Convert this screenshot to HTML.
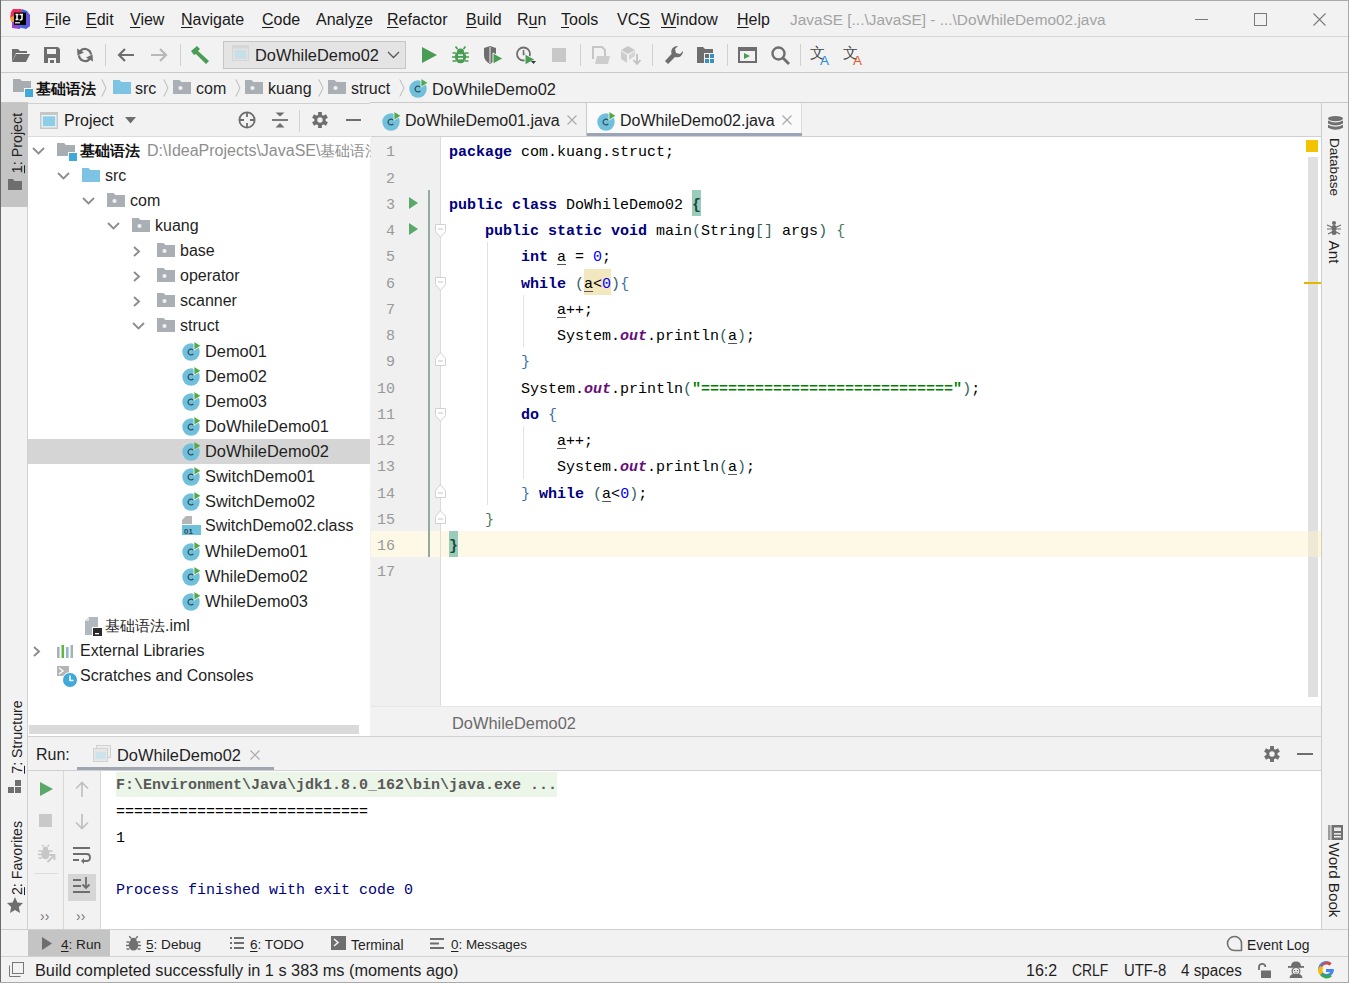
<!DOCTYPE html>
<html><head><meta charset="utf-8">
<style>
*{margin:0;padding:0;box-sizing:border-box}
html,body{width:1349px;height:983px;overflow:hidden;background:#f2f2f2;font-family:"Liberation Sans",sans-serif;font-size:16px;color:#1f1f1f}
.a{position:absolute}
.t{position:absolute;white-space:nowrap;line-height:20px}
.m{font-family:"Liberation Mono",monospace;font-size:15px}
.u{text-decoration:underline;text-underline-offset:1.5px;text-decoration-thickness:1px}
svg{position:absolute;overflow:visible}
.kw{color:#000080;font-weight:bold}
.num{color:#0000ff}
.str{color:#008000;font-weight:bold}
.fld{color:#660e7a;font-style:italic;font-weight:bold}
.ul{text-decoration:underline;text-underline-offset:3px;text-decoration-color:#555}
</style></head><body>

<div class="a" style="left:0px;top:0px;width:1349px;height:983px;background:#f2f2f2;"></div>
<svg style="left:10px;top:9px" width="20" height="20" viewBox="0 0 20 20">
<polygon points="3,0 11,0 14,3 12,9 0,9 1,3" fill="#f02c5c"/>
<polygon points="0,8 5,7 5,13 1,13" fill="#f59a3a"/>
<polygon points="2,13 12,13 10,20 2,19" fill="#9b3dd6"/>
<polygon points="12,0 17,2 20,6 20,17 16,20 8,18 11,4" fill="#4a62e0"/>
<polygon points="16,4 20,6 20,17 17,19" fill="#6a55e3"/>
<rect x="4" y="3.5" width="12" height="12.5" fill="#000"/>
<path d="M5.5,5.5 H8.5 M7,5.5 V10.5 M5.5,10.5 H8.5 M9.5,5.5 H13 M12,5.5 V9.5 Q12,11 10,11 H9.5" stroke="#fff" stroke-width="1.5" fill="none"/>
<rect x="5" y="13" width="5" height="1.5" fill="#ccc"/>
</svg>
<div class="t" style="left:45px;top:10px;color:#1a1a1a"><span class="u">F</span>ile</div>
<div class="t" style="left:86px;top:10px;color:#1a1a1a"><span class="u">E</span>dit</div>
<div class="t" style="left:130px;top:10px;color:#1a1a1a"><span class="u">V</span>iew</div>
<div class="t" style="left:181px;top:10px;color:#1a1a1a"><span class="u">N</span>avigate</div>
<div class="t" style="left:262px;top:10px;color:#1a1a1a"><span class="u">C</span>ode</div>
<div class="t" style="left:316px;top:10px;color:#1a1a1a">Analy<span class="u">z</span>e</div>
<div class="t" style="left:387px;top:10px;color:#1a1a1a"><span class="u">R</span>efactor</div>
<div class="t" style="left:466px;top:10px;color:#1a1a1a"><span class="u">B</span>uild</div>
<div class="t" style="left:517px;top:10px;color:#1a1a1a">R<span class="u">u</span>n</div>
<div class="t" style="left:561px;top:10px;color:#1a1a1a"><span class="u">T</span>ools</div>
<div class="t" style="left:617px;top:10px;color:#1a1a1a">VC<span class="u">S</span></div>
<div class="t" style="left:661px;top:10px;color:#1a1a1a"><span class="u">W</span>indow</div>
<div class="t" style="left:737px;top:10px;color:#1a1a1a"><span class="u">H</span>elp</div>
<div class="t" style="left:790px;top:10px;color:#a3a3a3;font-size:15.4px">JavaSE [...\JavaSE] - ...\DoWhileDemo02.java</div>
<div class="a" style="left:1195px;top:19px;width:13px;height:1px;background:#7a7a7a;"></div>
<div class="a" style="left:1254px;top:13px;width:13px;height:13px;border:1px solid #7a7a7a"></div>
<svg style="left:1313px;top:13px" width="14" height="14" viewBox="0 0 14 14"><path d="M0.5,0.5 L12.5,12.5 M12.5,0.5 L0.5,12.5" stroke="#7a7a7a" stroke-width="1.1"/></svg>
<div class="a" style="left:1px;top:36px;width:1347px;height:1px;background:#d6d6d6;"></div>
<svg style="left:12px;top:48px" width="18" height="14" viewBox="0 0 18 14"><path d="M0,1 h6 l2,2 h7 v2 h-11 l-4,9 z" fill="#6e6e6e"/><path d="M4,6 h14 l-4,8 h-14 z" fill="#6e6e6e"/></svg>
<svg style="left:44px;top:47px" width="16" height="16" viewBox="0 0 16 16"><path d="M0,0 h14 l2,2 v14 h-16 z" fill="#6e6e6e"/><rect x="3" y="2" width="9" height="5" fill="#f2f2f2"/><rect x="4" y="11" width="8" height="5" fill="#f2f2f2"/><rect x="6" y="13" width="4" height="3" fill="#6e6e6e"/></svg>
<svg style="left:77px;top:47px" width="16" height="16" viewBox="0 0 16 16"><path d="M14,7.6 A6.2,6.2 0 0 0 3,4.2" fill="none" stroke="#6e6e6e" stroke-width="2.2"/><path d="M2,8.4 A6.2,6.2 0 0 0 13,11.8" fill="none" stroke="#6e6e6e" stroke-width="2.2"/><polygon points="0,1.5 7,5.5 0.5,8.5" fill="#6e6e6e"/><polygon points="16,14.5 9,10.5 15.5,7.5" fill="#6e6e6e"/></svg>
<div class="a" style="left:105px;top:44px;width:1px;height:22px;background:#d0d0d0;"></div>
<svg style="left:117px;top:48px" width="17" height="14" viewBox="0 0 17 14"><path d="M17,7 H2 M8,1 L2,7 L8,13" fill="none" stroke="#6e6e6e" stroke-width="2.2"/></svg>
<svg style="left:151px;top:48px" width="17" height="14" viewBox="0 0 17 14"><path d="M0,7 H15 M9,1 L15,7 L9,13" fill="none" stroke="#b8b8b8" stroke-width="2.2"/></svg>
<div class="a" style="left:180px;top:44px;width:1px;height:22px;background:#d0d0d0;"></div>
<svg style="left:190px;top:46px" width="20" height="18" viewBox="0 0 20 18"><path d="M1,5 L7,0 L10,3 L8,5 L19,15 L16,18 L6,8 L4,9 z" fill="#499c54"/></svg>
<div class="a" style="left:223px;top:41px;width:183px;height:28px;background:#e4e4e4;border:1px solid #c6c6c6"></div>
<svg style="left:232px;top:45px" width="17" height="16" viewBox="0 0 17 16"><rect x="0.5" y="0.5" width="16" height="15" fill="#e2e2e2" stroke="#d6d6d6"/><rect x="0.5" y="0.5" width="16" height="3" fill="#d6d6d6"/><rect x="2.5" y="5" width="12" height="9" fill="#c9dfe8"/></svg>
<div class="t" style="left:255px;top:45px;color:#1f1f1f;font-size:16.4px">DoWhileDemo02</div>
<svg style="left:387px;top:51px" width="13" height="8" viewBox="0 0 13 8"><path d="M1,1 L6.5,6.5 L12,1" fill="none" stroke="#555" stroke-width="1.3"/></svg>
<svg style="left:422px;top:47px" width="15" height="16" viewBox="0 0 15 16"><polygon points="0,0 15,8 0,16" fill="#499c54"/></svg>
<svg style="left:452px;top:46px" width="17" height="18" viewBox="0 0 17 18"><ellipse cx="8.5" cy="11" rx="5.6" ry="6.3" fill="#499c54"/><ellipse cx="8.5" cy="5" rx="3.5" ry="2.6" fill="#499c54"/><path d="M0.5,7 H4 M13,7 H16.5 M0,11 H4 M13,11 H17 M0.5,15 H4 M13,15 H16.5 M5.5,3 L3.5,0.5 M11.5,3 L13.5,0.5" stroke="#499c54" stroke-width="1.7"/><rect x="6" y="8.3" width="5" height="1.6" fill="#e6f0e6"/><rect x="6" y="11.8" width="5" height="1.6" fill="#e6f0e6"/></svg>
<svg style="left:484px;top:46px" width="20" height="19" viewBox="0 0 20 19"><path d="M0,2 L6,0 L12,2 V9 Q12,15 6,18 Q0,15 0,9 z" fill="#6e6e6e"/><path d="M6,1 V17" stroke="#f2f2f2" stroke-width="1"/><polygon points="9,7 19,12.5 9,18" fill="#499c54" stroke="#f2f2f2" stroke-width="1"/></svg>
<svg style="left:516px;top:46px" width="20" height="19" viewBox="0 0 20 19"><circle cx="7.5" cy="8" r="6.5" fill="none" stroke="#6e6e6e" stroke-width="1.8"/><path d="M7.5,4 V8.5 H10" fill="none" stroke="#6e6e6e" stroke-width="1.6"/><polygon points="9,8 19,13.5 9,19" fill="#499c54" stroke="#f2f2f2" stroke-width="1"/><polygon points="15,15 20,15 17.5,18" fill="#333"/></svg>
<div class="a" style="left:552px;top:48px;width:14px;height:14px;background:#c8c8c8;"></div>
<div class="a" style="left:580px;top:44px;width:1px;height:22px;background:#d0d0d0;"></div>
<svg style="left:591px;top:46px" width="19" height="19" viewBox="0 0 19 19"><path d="M1,1 h10 l3,3 v6" fill="none" stroke="#c6c6c6" stroke-width="2"/><rect x="1" y="1" width="2" height="12" fill="#c6c6c6"/><polygon points="6,10 19,10 17,18 4,18" fill="#cdcdcd"/></svg>
<svg style="left:621px;top:46px" width="20" height="20" viewBox="0 0 20 20"><polygon points="0,4 7,0 14,4 7,8" fill="#c8c8c8"/><polygon points="0,5 6,9 6,17 0,13" fill="#cdcdcd"/><polygon points="8,9 14,5 14,10 8,14" fill="#d5d5d5"/><path d="M16,8 V17 M12.5,14 L16,18 L19.5,14" fill="none" stroke="#c0c0c0" stroke-width="1.8"/></svg>
<div class="a" style="left:652px;top:44px;width:1px;height:22px;background:#d0d0d0;"></div>
<svg style="left:665px;top:46px" width="20" height="19" viewBox="0 0 20 19"><path d="M12,0 A6,6 0 0 0 6.5,8 L0,15 L3,18 L10,11 A6,6 0 0 0 18,5 L15,8 L11,7 L10,3 L13,0 z" fill="#6e6e6e"/></svg>
<svg style="left:697px;top:47px" width="20" height="17" viewBox="0 0 20 17"><path d="M0,0 h6 l2,2 h8 v4 h-9 v10 h-7 z" fill="#6e6e6e"/><rect x="8" y="7" width="4" height="4" fill="#6e6e6e"/><rect x="13" y="7" width="4" height="4" fill="#3592c4"/><rect x="8" y="12" width="4" height="4" fill="#3592c4"/><rect x="13" y="12" width="4" height="4" fill="#3592c4"/></svg>
<div class="a" style="left:727px;top:44px;width:1px;height:22px;background:#d0d0d0;"></div>
<svg style="left:738px;top:47px" width="19" height="16" viewBox="0 0 19 16"><rect x="1" y="1" width="17" height="14" fill="none" stroke="#6e6e6e" stroke-width="2"/><rect x="1" y="1" width="17" height="3" fill="#6e6e6e"/><polygon points="6,6 12,9 6,12" fill="#499c54"/></svg>
<svg style="left:771px;top:46px" width="19" height="19" viewBox="0 0 19 19"><circle cx="7.5" cy="7.5" r="6" fill="none" stroke="#6e6e6e" stroke-width="2.4"/><path d="M12,12 L18,18" stroke="#6e6e6e" stroke-width="2.8"/></svg>
<div class="a" style="left:800px;top:44px;width:1px;height:22px;background:#d0d0d0;"></div>
<svg style="left:810px;top:45px" width="23" height="20" viewBox="0 0 23 20"><text x="0" y="13" font-family="Liberation Sans" font-size="15" fill="#4a4a4a">文</text><text x="10" y="19.5" font-family="Liberation Sans" font-size="13.5" fill="#2e8ad8">A</text></svg>
<svg style="left:843px;top:45px" width="23" height="20" viewBox="0 0 23 20"><text x="0" y="13" font-family="Liberation Sans" font-size="15" fill="#4a4a4a">文</text><text x="10" y="19.5" font-family="Liberation Sans" font-size="13.5" fill="#e8582c">A</text></svg>
<div class="a" style="left:1px;top:72px;width:1347px;height:1px;background:#cacaca;"></div>
<svg style="left:13px;top:79px" width="20" height="18" viewBox="0 0 20 18"><path d="M0,0 h7 l2,2 h9 v11 h-18 z" fill="#a8adb2"/><rect x="11" y="9" width="9" height="9" fill="#fff"/><rect x="12" y="10" width="8" height="8" fill="#3fa9d8"/></svg>
<div class="t" style="left:36px;top:79px;color:#111"><b style="font-size:15px">基础语法</b></div>
<svg style="left:101px;top:79px" width="6" height="18" viewBox="0 0 6 18"><path d="M0.8,0.5 L5,9 L0.8,17.5" fill="none" stroke="#b8b8b8" stroke-width="1"/></svg>
<svg style="left:113px;top:80px" width="18" height="14" viewBox="0 0 18 14"><path d="M0,0 h6.5 l2,2 h9.5 v12 h-18 z" fill="#7dc3e3"/></svg>
<div class="t" style="left:135px;top:79px;">src</div>
<svg style="left:163px;top:79px" width="6" height="18" viewBox="0 0 6 18"><path d="M0.8,0.5 L5,9 L0.8,17.5" fill="none" stroke="#b8b8b8" stroke-width="1"/></svg>
<svg style="left:173px;top:80px" width="18" height="14" viewBox="0 0 18 14"><path d="M0,0 h6.5 l2,2 h9.5 v12 h-18 z" fill="#a9afb4"/><circle cx="7.5" cy="8" r="2.1" fill="#f0f0f0"/></svg>
<div class="t" style="left:196px;top:79px;">com</div>
<svg style="left:235px;top:79px" width="6" height="18" viewBox="0 0 6 18"><path d="M0.8,0.5 L5,9 L0.8,17.5" fill="none" stroke="#b8b8b8" stroke-width="1"/></svg>
<svg style="left:245px;top:80px" width="18" height="14" viewBox="0 0 18 14"><path d="M0,0 h6.5 l2,2 h9.5 v12 h-18 z" fill="#a9afb4"/><circle cx="7.5" cy="8" r="2.1" fill="#f0f0f0"/></svg>
<div class="t" style="left:268px;top:79px;">kuang</div>
<svg style="left:318px;top:79px" width="6" height="18" viewBox="0 0 6 18"><path d="M0.8,0.5 L5,9 L0.8,17.5" fill="none" stroke="#b8b8b8" stroke-width="1"/></svg>
<svg style="left:328px;top:80px" width="18" height="14" viewBox="0 0 18 14"><path d="M0,0 h6.5 l2,2 h9.5 v12 h-18 z" fill="#a9afb4"/><circle cx="7.5" cy="8" r="2.1" fill="#f0f0f0"/></svg>
<div class="t" style="left:351px;top:79px;">struct</div>
<svg style="left:399px;top:79px" width="6" height="18" viewBox="0 0 6 18"><path d="M0.8,0.5 L5,9 L0.8,17.5" fill="none" stroke="#b8b8b8" stroke-width="1"/></svg>
<svg style="left:409px;top:78px" width="20" height="20" viewBox="0 0 20 20"><circle cx="9" cy="11" r="8.7" fill="#70c0dc"/><path d="M11.3,9.2 A2.9,2.9 0 1 0 11.3,12.8" fill="none" stroke="#2f4f5b" stroke-width="1.25"/><polygon points="12,0.5 19,4.8 12,9.2" fill="#4fa84a" stroke="#f2f2f2" stroke-width="0.8"/></svg>
<div class="t" style="left:432px;top:79px;font-size:16.4px">DoWhileDemo02</div>
<div class="a" style="left:1px;top:102px;width:1347px;height:1px;background:#c9c9c9;"></div>
<div class="a" style="left:1px;top:103px;width:27px;height:827px;background:#f2f2f2;"></div>
<div class="a" style="left:27px;top:103px;width:1px;height:827px;background:#d0d0d0;"></div>
<div class="a" style="left:1px;top:103px;width:27px;height:104px;background:#c4c4c4;"></div>
<div class="a" style="left:16.5px;top:143px;width:0;height:0"><div style="position:absolute;left:0;top:0;transform:translate(-50%,-50%) rotate(-90deg);white-space:nowrap;font-size:15px;line-height:18px;color:#222;font-size:14.3px"><span class="u">1</span>: Project</div></div>
<svg style="left:8px;top:179px" width="14" height="11" viewBox="0 0 14 11"><path d="M0,0 h5 l1.5,2 h7.5 v9 h-14 z" fill="#6e6e6e"/></svg>
<div class="a" style="left:16.5px;top:737px;width:0;height:0"><div style="position:absolute;left:0;top:0;transform:translate(-50%,-50%) rotate(-90deg);white-space:nowrap;font-size:15px;line-height:18px;color:#222;font-size:14.2px"><span class="u">7</span>: Structure</div></div>
<svg style="left:8px;top:780px" width="14" height="13" viewBox="0 0 14 13"><rect x="7" y="0" width="6" height="6" fill="#6e6e6e"/><rect x="0" y="7" width="6" height="6" fill="#6e6e6e"/><rect x="7" y="7" width="6" height="6" fill="#6e6e6e"/></svg>
<div class="a" style="left:16.5px;top:858px;width:0;height:0"><div style="position:absolute;left:0;top:0;transform:translate(-50%,-50%) rotate(-90deg);white-space:nowrap;font-size:15px;line-height:18px;color:#222;font-size:14.2px"><span class="u">2</span>: Favorites</div></div>
<svg style="left:7px;top:897px" width="16" height="16" viewBox="0 0 16 16"><polygon points="8,0 10.4,5.6 16,6 11.8,10 13,16 8,13 3,16 4.2,10 0,6 5.6,5.6" fill="#6e6e6e"/></svg>
<div class="a" style="left:28px;top:103px;width:342px;height:34px;background:#f2f2f2;"></div>
<div class="a" style="left:28px;top:102px;width:342px;height:1px;background:#f2f2f2;"></div>
<div class="a" style="left:28px;top:103px;width:342px;height:1px;background:#cfcfcf;"></div>
<svg style="left:40px;top:112px" width="18" height="17" viewBox="0 0 18 17"><rect x="0" y="0" width="18" height="17" fill="#c6c6c6"/><rect x="1.5" y="3" width="15" height="12.5" fill="#eaf5fa"/><rect x="2.8" y="4.3" width="12.4" height="9.9" fill="#8dcde6"/></svg>
<div class="t" style="left:64px;top:111px;">Project</div>
<svg style="left:125px;top:117px" width="11" height="7" viewBox="0 0 11 7"><polygon points="0,0 11,0 5.5,6.5" fill="#6e6e6e"/></svg>
<svg style="left:238px;top:111px" width="18" height="18" viewBox="0 0 18 18"><circle cx="9" cy="9" r="7.6" fill="none" stroke="#6e6e6e" stroke-width="1.8"/><path d="M9,1.5 V6 M9,12 V16.5 M1.5,9 H6 M12,9 H16.5" stroke="#6e6e6e" stroke-width="1.8"/></svg>
<svg style="left:272px;top:112px" width="16" height="16" viewBox="0 0 16 16"><path d="M0,8 H16" stroke="#6e6e6e" stroke-width="1.8"/><polygon points="3.5,0.5 12.5,0.5 8,4.5" fill="#6e6e6e"/><polygon points="3.5,15.5 12.5,15.5 8,11" fill="#6e6e6e"/></svg>
<div class="a" style="left:299px;top:110px;width:1px;height:22px;background:#d2d2d2;"></div>
<svg style="left:312px;top:112px" width="16" height="16" viewBox="0 0 16 16"><g transform="translate(8,8)"><circle r="5.6" fill="#6e6e6e"/><rect x="-1.9" y="-8" width="3.8" height="4" fill="#6e6e6e" transform="rotate(0)"/><rect x="-1.9" y="-8" width="3.8" height="4" fill="#6e6e6e" transform="rotate(60)"/><rect x="-1.9" y="-8" width="3.8" height="4" fill="#6e6e6e" transform="rotate(120)"/><rect x="-1.9" y="-8" width="3.8" height="4" fill="#6e6e6e" transform="rotate(180)"/><rect x="-1.9" y="-8" width="3.8" height="4" fill="#6e6e6e" transform="rotate(240)"/><rect x="-1.9" y="-8" width="3.8" height="4" fill="#6e6e6e" transform="rotate(300)"/><circle r="2.7" fill="#f2f2f2"/></g></svg>
<div class="a" style="left:346px;top:119px;width:15px;height:2px;background:#6e6e6e;"></div>
<div class="a" style="left:28px;top:136px;width:342px;height:1px;background:#dcdcdc;"></div>
<div class="a" style="left:28px;top:137px;width:342px;height:587px;background:#ffffff;"></div>
<div class="a" style="left:28px;top:439px;width:342px;height:25px;background:#d5d5d5;"></div>
<svg style="left:32px;top:147px" width="13" height="8" viewBox="0 0 13 8"><path d="M1,1 L6.5,6.5 L12,1" fill="none" stroke="#8c8c8c" stroke-width="1.8"/></svg>
<svg style="left:57px;top:143px" width="20" height="18" viewBox="0 0 20 18"><path d="M0,0 h7 l2,2 h9 v11 h-18 z" fill="#a8adb2"/><rect x="11" y="9" width="9" height="9" fill="#fff"/><rect x="12" y="10" width="8" height="8" fill="#3fa9d8"/></svg>
<div class="t" style="left:80px;top:141px;color:#111"><b style="font-size:15px">基础语法</b></div>
<div class="t" style="left:147px;top:141px;color:#8e8e8e">D:\IdeaProjects\JavaSE\<span style="font-size:15px">基础语法</span></div>
<svg style="left:57px;top:172px" width="13" height="8" viewBox="0 0 13 8"><path d="M1,1 L6.5,6.5 L12,1" fill="none" stroke="#8c8c8c" stroke-width="1.8"/></svg>
<svg style="left:82px;top:168px" width="18" height="14" viewBox="0 0 18 14"><path d="M0,0 h6.5 l2,2 h9.5 v12 h-18 z" fill="#7dc3e3"/></svg>
<div class="t" style="left:105px;top:166px;">src</div>
<svg style="left:82px;top:197px" width="13" height="8" viewBox="0 0 13 8"><path d="M1,1 L6.5,6.5 L12,1" fill="none" stroke="#8c8c8c" stroke-width="1.8"/></svg>
<svg style="left:107px;top:193px" width="18" height="14" viewBox="0 0 18 14"><path d="M0,0 h6.5 l2,2 h9.5 v12 h-18 z" fill="#a9afb4"/><circle cx="7.5" cy="8" r="2.1" fill="#f0f0f0"/></svg>
<div class="t" style="left:130px;top:191px;">com</div>
<svg style="left:107px;top:222px" width="13" height="8" viewBox="0 0 13 8"><path d="M1,1 L6.5,6.5 L12,1" fill="none" stroke="#8c8c8c" stroke-width="1.8"/></svg>
<svg style="left:132px;top:218px" width="18" height="14" viewBox="0 0 18 14"><path d="M0,0 h6.5 l2,2 h9.5 v12 h-18 z" fill="#a9afb4"/><circle cx="7.5" cy="8" r="2.1" fill="#f0f0f0"/></svg>
<div class="t" style="left:155px;top:216px;">kuang</div>
<svg style="left:133px;top:245.5px" width="8" height="11" viewBox="0 0 8 11"><path d="M1,1 L6,5.5 L1,10" fill="none" stroke="#8c8c8c" stroke-width="1.9"/></svg>
<svg style="left:157px;top:243px" width="18" height="14" viewBox="0 0 18 14"><path d="M0,0 h6.5 l2,2 h9.5 v12 h-18 z" fill="#a9afb4"/><circle cx="7.5" cy="8" r="2.1" fill="#f0f0f0"/></svg>
<div class="t" style="left:180px;top:241px;">base</div>
<svg style="left:133px;top:270.5px" width="8" height="11" viewBox="0 0 8 11"><path d="M1,1 L6,5.5 L1,10" fill="none" stroke="#8c8c8c" stroke-width="1.9"/></svg>
<svg style="left:157px;top:268px" width="18" height="14" viewBox="0 0 18 14"><path d="M0,0 h6.5 l2,2 h9.5 v12 h-18 z" fill="#a9afb4"/><circle cx="7.5" cy="8" r="2.1" fill="#f0f0f0"/></svg>
<div class="t" style="left:180px;top:266px;">operator</div>
<svg style="left:133px;top:295.5px" width="8" height="11" viewBox="0 0 8 11"><path d="M1,1 L6,5.5 L1,10" fill="none" stroke="#8c8c8c" stroke-width="1.9"/></svg>
<svg style="left:157px;top:293px" width="18" height="14" viewBox="0 0 18 14"><path d="M0,0 h6.5 l2,2 h9.5 v12 h-18 z" fill="#a9afb4"/><circle cx="7.5" cy="8" r="2.1" fill="#f0f0f0"/></svg>
<div class="t" style="left:180px;top:291px;">scanner</div>
<svg style="left:132px;top:322px" width="13" height="8" viewBox="0 0 13 8"><path d="M1,1 L6.5,6.5 L12,1" fill="none" stroke="#8c8c8c" stroke-width="1.8"/></svg>
<svg style="left:157px;top:318px" width="18" height="14" viewBox="0 0 18 14"><path d="M0,0 h6.5 l2,2 h9.5 v12 h-18 z" fill="#a9afb4"/><circle cx="7.5" cy="8" r="2.1" fill="#f0f0f0"/></svg>
<div class="t" style="left:180px;top:316px;">struct</div>
<svg style="left:182px;top:341px" width="20" height="20" viewBox="0 0 20 20"><circle cx="9" cy="11" r="8.7" fill="#70c0dc"/><path d="M11.3,9.2 A2.9,2.9 0 1 0 11.3,12.8" fill="none" stroke="#2f4f5b" stroke-width="1.25"/><polygon points="12,0.5 19,4.8 12,9.2" fill="#4fa84a" stroke="#fff" stroke-width="0.8"/></svg>
<div class="t" style="left:205px;top:341px;font-size:16.4px">Demo01</div>
<svg style="left:182px;top:366px" width="20" height="20" viewBox="0 0 20 20"><circle cx="9" cy="11" r="8.7" fill="#70c0dc"/><path d="M11.3,9.2 A2.9,2.9 0 1 0 11.3,12.8" fill="none" stroke="#2f4f5b" stroke-width="1.25"/><polygon points="12,0.5 19,4.8 12,9.2" fill="#4fa84a" stroke="#fff" stroke-width="0.8"/></svg>
<div class="t" style="left:205px;top:366px;font-size:16.4px">Demo02</div>
<svg style="left:182px;top:391px" width="20" height="20" viewBox="0 0 20 20"><circle cx="9" cy="11" r="8.7" fill="#70c0dc"/><path d="M11.3,9.2 A2.9,2.9 0 1 0 11.3,12.8" fill="none" stroke="#2f4f5b" stroke-width="1.25"/><polygon points="12,0.5 19,4.8 12,9.2" fill="#4fa84a" stroke="#fff" stroke-width="0.8"/></svg>
<div class="t" style="left:205px;top:391px;font-size:16.4px">Demo03</div>
<svg style="left:182px;top:416px" width="20" height="20" viewBox="0 0 20 20"><circle cx="9" cy="11" r="8.7" fill="#70c0dc"/><path d="M11.3,9.2 A2.9,2.9 0 1 0 11.3,12.8" fill="none" stroke="#2f4f5b" stroke-width="1.25"/><polygon points="12,0.5 19,4.8 12,9.2" fill="#4fa84a" stroke="#fff" stroke-width="0.8"/></svg>
<div class="t" style="left:205px;top:416px;font-size:16.4px">DoWhileDemo01</div>
<svg style="left:182px;top:441px" width="20" height="20" viewBox="0 0 20 20"><circle cx="9" cy="11" r="8.7" fill="#70c0dc"/><path d="M11.3,9.2 A2.9,2.9 0 1 0 11.3,12.8" fill="none" stroke="#2f4f5b" stroke-width="1.25"/><polygon points="12,0.5 19,4.8 12,9.2" fill="#4fa84a" stroke="#d5d5d5" stroke-width="0.8"/></svg>
<div class="t" style="left:205px;top:441px;font-size:16.4px">DoWhileDemo02</div>
<svg style="left:182px;top:466px" width="20" height="20" viewBox="0 0 20 20"><circle cx="9" cy="11" r="8.7" fill="#70c0dc"/><path d="M11.3,9.2 A2.9,2.9 0 1 0 11.3,12.8" fill="none" stroke="#2f4f5b" stroke-width="1.25"/><polygon points="12,0.5 19,4.8 12,9.2" fill="#4fa84a" stroke="#fff" stroke-width="0.8"/></svg>
<div class="t" style="left:205px;top:466px;font-size:16.4px">SwitchDemo01</div>
<svg style="left:182px;top:491px" width="20" height="20" viewBox="0 0 20 20"><circle cx="9" cy="11" r="8.7" fill="#70c0dc"/><path d="M11.3,9.2 A2.9,2.9 0 1 0 11.3,12.8" fill="none" stroke="#2f4f5b" stroke-width="1.25"/><polygon points="12,0.5 19,4.8 12,9.2" fill="#4fa84a" stroke="#fff" stroke-width="0.8"/></svg>
<div class="t" style="left:205px;top:491px;font-size:16.4px">SwitchDemo02</div>
<svg style="left:182px;top:516px" width="19" height="19" viewBox="0 0 19 19"><path d="M4,0 h6 v8 h-10 v-4 z" fill="#b5b5b5"/><rect x="0" y="9" width="19" height="10" fill="#6ec1dc"/><text x="2" y="17.5" font-family="Liberation Sans" font-size="8" font-weight="bold" fill="#2e4a56">01</text></svg>
<div class="t" style="left:205px;top:516px;font-size:16px">SwitchDemo02.class</div>
<svg style="left:182px;top:541px" width="20" height="20" viewBox="0 0 20 20"><circle cx="9" cy="11" r="8.7" fill="#70c0dc"/><path d="M11.3,9.2 A2.9,2.9 0 1 0 11.3,12.8" fill="none" stroke="#2f4f5b" stroke-width="1.25"/><polygon points="12,0.5 19,4.8 12,9.2" fill="#4fa84a" stroke="#fff" stroke-width="0.8"/></svg>
<div class="t" style="left:205px;top:541px;font-size:16.4px">WhileDemo01</div>
<svg style="left:182px;top:566px" width="20" height="20" viewBox="0 0 20 20"><circle cx="9" cy="11" r="8.7" fill="#70c0dc"/><path d="M11.3,9.2 A2.9,2.9 0 1 0 11.3,12.8" fill="none" stroke="#2f4f5b" stroke-width="1.25"/><polygon points="12,0.5 19,4.8 12,9.2" fill="#4fa84a" stroke="#fff" stroke-width="0.8"/></svg>
<div class="t" style="left:205px;top:566px;font-size:16.4px">WhileDemo02</div>
<svg style="left:182px;top:591px" width="20" height="20" viewBox="0 0 20 20"><circle cx="9" cy="11" r="8.7" fill="#70c0dc"/><path d="M11.3,9.2 A2.9,2.9 0 1 0 11.3,12.8" fill="none" stroke="#2f4f5b" stroke-width="1.25"/><polygon points="12,0.5 19,4.8 12,9.2" fill="#4fa84a" stroke="#fff" stroke-width="0.8"/></svg>
<div class="t" style="left:205px;top:591px;font-size:16.4px">WhileDemo03</div>
<svg style="left:85px;top:617px" width="17" height="19" viewBox="0 0 17 19"><path d="M4,0 H13 V18 H0 V4 Z" fill="#b2b9be"/><path d="M4,0 V4 H0 Z" fill="#dde1e4"/><rect x="7" y="10" width="10" height="9" fill="#fff"/><rect x="8" y="11" width="9" height="8" fill="#2b2b2b"/><rect x="10" y="16" width="4" height="1.3" fill="#fff"/></svg>
<div class="t" style="left:105px;top:616px;"><span style="font-size:15px">基础语法</span>.iml</div>
<svg style="left:33px;top:645.5px" width="8" height="11" viewBox="0 0 8 11"><path d="M1,1 L6,5.5 L1,10" fill="none" stroke="#8c8c8c" stroke-width="1.9"/></svg>
<svg style="left:57px;top:645px" width="18" height="13" viewBox="0 0 18 13"><rect x="0" y="2" width="2.6" height="11" fill="#a7b1b8"/><rect x="4.5" y="0" width="2.6" height="13" fill="#62b543"/><rect x="9" y="2" width="2.6" height="11" fill="#8fb8cf"/><rect x="13.5" y="0" width="2.6" height="13" fill="#a7b1b8"/></svg>
<div class="t" style="left:80px;top:641px;">External Libraries</div>
<svg style="left:57px;top:666px" width="21" height="22" viewBox="0 0 21 22"><rect x="0" y="0" width="12" height="10" fill="#b5b5b5"/><path d="M2,2 L6,5 L2,8" stroke="#fff" fill="none" stroke-width="1.3"/><circle cx="13" cy="14" r="7.5" fill="#40a9dc" stroke="#fff" stroke-width="1"/><path d="M13,9.5 V14.5 H16.5" stroke="#fff" fill="none" stroke-width="1.5"/></svg>
<div class="t" style="left:80px;top:666px;">Scratches and Consoles</div>
<div class="a" style="left:28px;top:724px;width:342px;height:12px;background:#ffffff;"></div>
<div class="a" style="left:29px;top:725px;width:330px;height:9px;background:#dadada;"></div>
<div class="a" style="left:28px;top:736px;width:342px;height:1px;background:#d0d0d0;"></div>
<div class="a" style="left:371px;top:103px;width:950px;height:34px;background:#f2f2f2;"></div>
<svg style="left:382px;top:111px" width="20" height="20" viewBox="0 0 20 20"><circle cx="9" cy="11" r="8.7" fill="#70c0dc"/><path d="M11.3,9.2 A2.9,2.9 0 1 0 11.3,12.8" fill="none" stroke="#2f4f5b" stroke-width="1.25"/><polygon points="12,0.5 19,4.8 12,9.2" fill="#4fa84a" stroke="#f2f2f2" stroke-width="0.8"/></svg>
<div class="t" style="left:405px;top:111px;">DoWhileDemo01.java</div>
<svg style="left:567px;top:115px" width="10" height="10" viewBox="0 0 10 10"><path d="M0.5,0.5 L9.5,9.5 M9.5,0.5 L0.5,9.5" stroke="#a8a8a8" stroke-width="1.1"/></svg>
<div class="a" style="left:587px;top:103px;width:215px;height:30px;background:#fafafa;"></div>
<div class="a" style="left:801px;top:103px;width:1px;height:30px;background:#dadada;"></div>
<div class="a" style="left:586px;top:133px;width:216px;height:3px;background:#9aa5b8;"></div>
<div class="a" style="left:586px;top:103px;width:1px;height:33px;background:#c9c9c9;"></div>
<svg style="left:597px;top:111px" width="20" height="20" viewBox="0 0 20 20"><circle cx="9" cy="11" r="8.7" fill="#70c0dc"/><path d="M11.3,9.2 A2.9,2.9 0 1 0 11.3,12.8" fill="none" stroke="#2f4f5b" stroke-width="1.25"/><polygon points="12,0.5 19,4.8 12,9.2" fill="#4fa84a" stroke="#fafafa" stroke-width="0.8"/></svg>
<div class="t" style="left:620px;top:111px;">DoWhileDemo02.java</div>
<svg style="left:782px;top:115px" width="10" height="10" viewBox="0 0 10 10"><path d="M0.5,0.5 L9.5,9.5 M9.5,0.5 L0.5,9.5" stroke="#a8a8a8" stroke-width="1.1"/></svg>
<div class="a" style="left:371px;top:136px;width:950px;height:1px;background:#d0d0d0;"></div>
<div class="a" style="left:371px;top:137px;width:950px;height:570px;background:#ffffff;"></div>
<div class="a" style="left:371px;top:137px;width:69px;height:570px;background:#f0f0f0;"></div>
<div class="a" style="left:371px;top:531px;width:950px;height:26px;background:#fdf9e6;"></div>
<div class="a" style="left:440px;top:137px;width:1px;height:570px;background:#dcdcdc;"></div>
<div class="a" style="left:428px;top:190px;width:2px;height:367px;background:#92ab9f;"></div>
<div class="t m" style="left:370px;top:140px;width:25px;text-align:right;line-height:26px;color:#999">1</div>
<div class="t m" style="left:370px;top:167px;width:25px;text-align:right;line-height:26px;color:#999">2</div>
<div class="t m" style="left:370px;top:193px;width:25px;text-align:right;line-height:26px;color:#999">3</div>
<div class="t m" style="left:370px;top:219px;width:25px;text-align:right;line-height:26px;color:#999">4</div>
<div class="t m" style="left:370px;top:245px;width:25px;text-align:right;line-height:26px;color:#999">5</div>
<div class="t m" style="left:370px;top:272px;width:25px;text-align:right;line-height:26px;color:#999">6</div>
<div class="t m" style="left:370px;top:298px;width:25px;text-align:right;line-height:26px;color:#999">7</div>
<div class="t m" style="left:370px;top:324px;width:25px;text-align:right;line-height:26px;color:#999">8</div>
<div class="t m" style="left:370px;top:350px;width:25px;text-align:right;line-height:26px;color:#999">9</div>
<div class="t m" style="left:370px;top:377px;width:25px;text-align:right;line-height:26px;color:#999">10</div>
<div class="t m" style="left:370px;top:403px;width:25px;text-align:right;line-height:26px;color:#999">11</div>
<div class="t m" style="left:370px;top:429px;width:25px;text-align:right;line-height:26px;color:#999">12</div>
<div class="t m" style="left:370px;top:455px;width:25px;text-align:right;line-height:26px;color:#999">13</div>
<div class="t m" style="left:370px;top:482px;width:25px;text-align:right;line-height:26px;color:#999">14</div>
<div class="t m" style="left:370px;top:508px;width:25px;text-align:right;line-height:26px;color:#999">15</div>
<div class="t m" style="left:370px;top:534px;width:25px;text-align:right;line-height:26px;color:#999">16</div>
<div class="t m" style="left:370px;top:560px;width:25px;text-align:right;line-height:26px;color:#999">17</div>
<svg style="left:409px;top:197px" width="9" height="12" viewBox="0 0 9 12"><polygon points="0,0 9,6 0,12" fill="#59a869"/></svg>
<svg style="left:409px;top:223px" width="9" height="12" viewBox="0 0 9 12"><polygon points="0,0 9,6 0,12" fill="#59a869"/></svg>
<svg style="left:435px;top:224px" width="11" height="14" viewBox="0 0 11 14"><path d="M0.5,0.5 H10.5 V7.5 L5.5,13.3 L0.5,7.5 Z" fill="#fff" stroke="#d2d2d2"/><path d="M3,5 H8" stroke="#c4c4c4"/></svg>
<svg style="left:435px;top:277px" width="11" height="14" viewBox="0 0 11 14"><path d="M0.5,0.5 H10.5 V7.5 L5.5,13.3 L0.5,7.5 Z" fill="#fff" stroke="#d2d2d2"/><path d="M3,5 H8" stroke="#c4c4c4"/></svg>
<svg style="left:435px;top:408px" width="11" height="14" viewBox="0 0 11 14"><path d="M0.5,0.5 H10.5 V7.5 L5.5,13.3 L0.5,7.5 Z" fill="#fff" stroke="#d2d2d2"/><path d="M3,5 H8" stroke="#c4c4c4"/></svg>
<svg style="left:435px;top:352px" width="11" height="14" viewBox="0 0 11 14"><path d="M0.5,13.5 H10.5 V6.5 L5.5,0.7 L0.5,6.5 Z" fill="#fff" stroke="#d2d2d2"/><path d="M3,9 H8" stroke="#c4c4c4"/></svg>
<svg style="left:435px;top:484px" width="11" height="14" viewBox="0 0 11 14"><path d="M0.5,13.5 H10.5 V6.5 L5.5,0.7 L0.5,6.5 Z" fill="#fff" stroke="#d2d2d2"/><path d="M3,9 H8" stroke="#c4c4c4"/></svg>
<svg style="left:435px;top:510px" width="11" height="14" viewBox="0 0 11 14"><path d="M0.5,13.5 H10.5 V6.5 L5.5,0.7 L0.5,6.5 Z" fill="#fff" stroke="#d2d2d2"/><path d="M3,9 H8" stroke="#c4c4c4"/></svg>
<div class="a" style="left:487px;top:242px;width:1px;height:263px;background:#e2e2e2;"></div>
<div class="a" style="left:523px;top:295px;width:1px;height:52px;background:#e2e2e2;"></div>
<div class="a" style="left:523px;top:426px;width:1px;height:53px;background:#e2e2e2;"></div>
<div class="a" style="left:692px;top:190px;width:9px;height:26px;background:#99ccbb;"></div>
<div class="a" style="left:584px;top:269px;width:27px;height:26px;background:#f2e7bf;"></div>
<div class="a" style="left:449px;top:531px;width:9px;height:26px;background:#99ccbb;"></div>
<div class="t m" style="left:449px;top:140px;line-height:26px;color:#000;white-space:pre"><span class="kw">package</span> com.kuang.struct;</div>
<div class="t m" style="left:449px;top:193px;line-height:26px;color:#000;white-space:pre"><span class="kw">public class</span> DoWhileDemo02 <span style="color:#1d4a3a;font-weight:bold">{</span></div>
<div class="t m" style="left:449px;top:219px;line-height:26px;color:#000;white-space:pre">    <span class="kw">public static void</span> main<span style="color:#33625f">(</span>String<span style="color:#33625f">[]</span> args<span style="color:#33625f">)</span> <span style="color:#4b7a58">{</span></div>
<div class="t m" style="left:449px;top:245px;line-height:26px;color:#000;white-space:pre">        <span class="kw">int</span> <span class="ul">a</span> = <span class="num">0</span>;</div>
<div class="t m" style="left:449px;top:272px;line-height:26px;color:#000;white-space:pre">        <span class="kw">while</span> <span style="color:#33625f">(</span><span class="ul">a</span>&lt;<span class="num">0</span><span style="color:#33625f">)</span><span style="color:#3b6fae">{</span></div>
<div class="t m" style="left:449px;top:298px;line-height:26px;color:#000;white-space:pre">            <span class="ul">a</span>++;</div>
<div class="t m" style="left:449px;top:324px;line-height:26px;color:#000;white-space:pre">            System.<span class="fld">out</span>.println<span style="color:#33625f">(</span><span class="ul">a</span><span style="color:#33625f">)</span>;</div>
<div class="t m" style="left:449px;top:350px;line-height:26px;color:#000;white-space:pre">        <span style="color:#3b6fae">}</span></div>
<div class="t m" style="left:449px;top:377px;line-height:26px;color:#000;white-space:pre">        System.<span class="fld">out</span>.println<span style="color:#33625f">(</span><span class="str">"============================"</span><span style="color:#33625f">)</span>;</div>
<div class="t m" style="left:449px;top:403px;line-height:26px;color:#000;white-space:pre">        <span class="kw">do</span> <span style="color:#3b6fae">{</span></div>
<div class="t m" style="left:449px;top:429px;line-height:26px;color:#000;white-space:pre">            <span class="ul">a</span>++;</div>
<div class="t m" style="left:449px;top:455px;line-height:26px;color:#000;white-space:pre">            System.<span class="fld">out</span>.println<span style="color:#33625f">(</span><span class="ul">a</span><span style="color:#33625f">)</span>;</div>
<div class="t m" style="left:449px;top:482px;line-height:26px;color:#000;white-space:pre">        <span style="color:#3b6fae">}</span> <span class="kw">while</span> <span style="color:#33625f">(</span><span class="ul">a</span>&lt;<span class="num">0</span><span style="color:#33625f">)</span>;</div>
<div class="t m" style="left:449px;top:508px;line-height:26px;color:#000;white-space:pre">    <span style="color:#4b7a58">}</span></div>
<div class="t m" style="left:449px;top:534px;line-height:26px;color:#000;white-space:pre"><span style="color:#1d4a3a;font-weight:bold">}</span></div>
<div class="a" style="left:1306px;top:140px;width:12px;height:12px;background:#f2c300;"></div>
<div class="a" style="left:1308px;top:157px;width:10px;height:540px;background:#e0e0e0;"></div>
<div class="a" style="left:1304px;top:282px;width:17px;height:2px;background:#e8b500;"></div>
<div class="a" style="left:1308px;top:531px;width:13px;height:26px;background:rgba(255,245,200,0.45);"></div>
<div class="a" style="left:371px;top:706px;width:950px;height:1px;background:#e6e6e6;"></div>
<div class="a" style="left:371px;top:707px;width:950px;height:30px;background:#f2f2f2;"></div>
<div class="t" style="left:452px;top:713px;color:#6a6a6a;font-size:16.4px">DoWhileDemo02</div>
<div class="a" style="left:370px;top:736px;width:951px;height:1px;background:#d0d0d0;"></div>
<div class="a" style="left:1321px;top:103px;width:27px;height:827px;background:#f2f2f2;"></div>
<div class="a" style="left:1321px;top:102px;width:1px;height:828px;background:#cdcdcd;"></div>
<svg style="left:1328px;top:116px" width="15" height="16" viewBox="0 0 15 16"><ellipse cx="7.5" cy="2.6" rx="7.5" ry="2.6" fill="#707070"/><path d="M0,4.6 Q7.5,8.6 15,4.6 V7.4 Q7.5,11.4 0,7.4 Z" fill="#707070"/><path d="M0,8.8 Q7.5,12.8 15,8.8 V11.8 Q7.5,15.8 0,11.8 Z" fill="#707070"/></svg>
<div class="a" style="left:1333.5px;top:166.5px;width:0;height:0"><div style="position:absolute;left:0;top:0;transform:translate(-50%,-50%) rotate(90deg);white-space:nowrap;font-size:15px;line-height:18px;color:#222;font-size:13.6px">Database</div></div>
<svg style="left:1327px;top:220px" width="14" height="15" viewBox="0 0 14 15"><circle cx="7" cy="3" r="2" fill="#6e6e6e"/><ellipse cx="7" cy="8" rx="2.5" ry="3" fill="#6e6e6e"/><ellipse cx="7" cy="12.5" rx="2.5" ry="2.5" fill="#6e6e6e"/><path d="M0,5 L7,8 L14,5 M0,9 H14 M1,14 L7,11 L13,14" stroke="#6e6e6e" stroke-width="1.2" fill="none"/></svg>
<div class="a" style="left:1333.5px;top:251.5px;width:0;height:0"><div style="position:absolute;left:0;top:0;transform:translate(-50%,-50%) rotate(90deg);white-space:nowrap;font-size:15px;line-height:18px;color:#222;font-size:15.2px">Ant</div></div>
<svg style="left:1328px;top:825px" width="15" height="15" viewBox="0 0 15 15"><rect x="0" y="0" width="2.5" height="15" fill="#9c9c9c"/><rect x="3.5" y="0" width="11.5" height="15" fill="#707070"/><rect x="6" y="2.5" width="7" height="3.5" fill="#e8e8e8"/><rect x="6" y="8" width="7" height="1.6" fill="#e8e8e8"/><rect x="6" y="11" width="7" height="1.6" fill="#e8e8e8"/></svg>
<div class="a" style="left:1333.5px;top:880px;width:0;height:0"><div style="position:absolute;left:0;top:0;transform:translate(-50%,-50%) rotate(90deg);white-space:nowrap;font-size:15px;line-height:18px;color:#222;font-size:15.2px">Word Book</div></div>
<div class="a" style="left:28px;top:737px;width:1293px;height:33px;background:#f2f2f2;"></div>
<div class="t" style="left:36px;top:745px;">Run:</div>
<svg style="left:93px;top:745px" width="18" height="17" viewBox="0 0 18 17"><rect x="3.5" y="0.5" width="14" height="12" fill="#ececec" stroke="#d2d2d2"/><rect x="0.5" y="3.5" width="14" height="13" fill="#e6e6e6" stroke="#d2d2d2"/><rect x="2.5" y="7" width="10" height="7" fill="#cde3ec"/></svg>
<div class="t" style="left:117px;top:745px;font-size:16.4px">DoWhileDemo02</div>
<svg style="left:250px;top:750px" width="10" height="10" viewBox="0 0 10 10"><path d="M0.5,0.5 L9.5,9.5 M9.5,0.5 L0.5,9.5" stroke="#a8a8a8" stroke-width="1.1"/></svg>
<div class="a" style="left:77px;top:767px;width:197px;height:3px;background:#a0a6b0;"></div>
<svg style="left:1264px;top:746px" width="16" height="16" viewBox="0 0 16 16"><g transform="translate(8,8)"><circle r="5.6" fill="#6e6e6e"/><rect x="-1.9" y="-8" width="3.8" height="4" fill="#6e6e6e" transform="rotate(0)"/><rect x="-1.9" y="-8" width="3.8" height="4" fill="#6e6e6e" transform="rotate(60)"/><rect x="-1.9" y="-8" width="3.8" height="4" fill="#6e6e6e" transform="rotate(120)"/><rect x="-1.9" y="-8" width="3.8" height="4" fill="#6e6e6e" transform="rotate(180)"/><rect x="-1.9" y="-8" width="3.8" height="4" fill="#6e6e6e" transform="rotate(240)"/><rect x="-1.9" y="-8" width="3.8" height="4" fill="#6e6e6e" transform="rotate(300)"/><circle r="2.7" fill="#f2f2f2"/></g></svg>
<div class="a" style="left:1297px;top:753px;width:16px;height:2px;background:#6e6e6e;"></div>
<div class="a" style="left:28px;top:770px;width:1293px;height:1px;background:#d0d0d0;"></div>
<div class="a" style="left:28px;top:771px;width:1293px;height:159px;background:#ffffff;"></div>
<div class="a" style="left:28px;top:771px;width:72px;height:159px;background:#f2f2f2;"></div>
<div class="a" style="left:63px;top:771px;width:1px;height:159px;background:#d8d8d8;"></div>
<div class="a" style="left:100px;top:771px;width:1px;height:159px;background:#d8d8d8;"></div>
<svg style="left:40px;top:782px" width="13" height="14" viewBox="0 0 13 14"><polygon points="0,0 13,7 0,14" fill="#59a869"/></svg>
<div class="a" style="left:39px;top:814px;width:13px;height:13px;background:#c9c9c9;"></div>
<svg style="left:38px;top:845px" width="18" height="18" viewBox="0 0 18 18"><g fill="#c6c6c6" stroke="#c6c6c6"><ellipse cx="7.5" cy="9" rx="4.3" ry="5.3" stroke="none"/><ellipse cx="7.5" cy="3.6" rx="2.6" ry="2" stroke="none"/><path d="M0.5,6 H4 M11,6 H14.5 M0,9.5 H4 M0.5,13 H4 M5.5,1.5 L4,0 M9.5,1.5 L11,0" stroke-width="1.6" fill="none"/></g><path d="M9.5,17 L16.5,10 M11.5,10 H16.5 V15" stroke="#f2f2f2" stroke-width="4" fill="none"/><path d="M9.5,17 L16.5,10 M11.5,10 H16.5 V15" stroke="#c6c6c6" stroke-width="1.8" fill="none"/></svg>
<div class="a" style="left:34px;top:873px;width:24px;height:1px;background:#dcdcdc;"></div>
<div class="t" style="left:40px;top:908px;color:#777;font-size:14px;line-height:16px">››</div>
<svg style="left:75px;top:781px" width="14" height="16" viewBox="0 0 14 16"><path d="M7,16 V2 M1,7.5 L7,1.5 L13,7.5" stroke="#c0c0c0" stroke-width="1.7" fill="none"/></svg>
<svg style="left:75px;top:814px" width="14" height="16" viewBox="0 0 14 16"><path d="M7,0 V14 M1,8.5 L7,14.5 L13,8.5" stroke="#c0c0c0" stroke-width="1.7" fill="none"/></svg>
<svg style="left:73px;top:847px" width="18" height="16" viewBox="0 0 18 16"><path d="M0,1 H17 M0,7 H14 Q17,7 17,10.5 Q17,14 14,14 H9 M0,13 H6" stroke="#6e6e6e" stroke-width="1.8" fill="none"/><polygon points="11,11 8,14 11,17" fill="#6e6e6e"/></svg>
<div class="a" style="left:68px;top:874px;width:28px;height:27px;background:#d6d6d6;"></div>
<svg style="left:73px;top:877px" width="18" height="18" viewBox="0 0 18 18"><path d="M0,3 H8 M0,9 H8 M0,15 H17 M13,0 V11 M9.5,7.5 L13,11 L16.5,7.5" stroke="#6e6e6e" stroke-width="1.8" fill="none"/></svg>
<div class="t" style="left:76px;top:908px;color:#777;font-size:14px;line-height:16px">››</div>
<div class="a" style="left:116px;top:772px;width:441px;height:25px;background:#ebf6e8;"></div>
<div class="t m" style="left:116px;top:773px;color:#595959;line-height:26px"><b>F:\Environment\Java\jdk1.8.0_162\bin\java.exe ...</b></div>
<div class="t m" style="left:116px;top:800px;color:#000;line-height:26px">============================</div>
<div class="t m" style="left:116px;top:826px;color:#000;line-height:26px">1</div>
<div class="t m" style="left:116px;top:878px;color:#000080;line-height:26px">Process finished with exit code 0</div>
<div class="a" style="left:1309px;top:771px;width:9px;height:0px;background:#e0e0e0;"></div>
<div class="a" style="left:1px;top:929px;width:1347px;height:1px;background:#d0d0d0;"></div>
<div class="a" style="left:1px;top:930px;width:1347px;height:27px;background:#f2f2f2;"></div>
<div class="a" style="left:28px;top:930px;width:82px;height:27px;background:#c4c4c4;"></div>
<svg style="left:42px;top:937px" width="10" height="13" viewBox="0 0 10 13"><polygon points="0,0 10,6.5 0,13" fill="#6e6e6e"/></svg>
<div class="t" style="left:61px;top:935px;font-size:13.6px"><span class="u">4</span>: Run</div>
<svg style="left:126px;top:936px" width="15" height="15" viewBox="0 0 15 15"><ellipse cx="7.5" cy="9" rx="4.8" ry="5.6" fill="#707070"/><ellipse cx="7.5" cy="4" rx="3" ry="2.3" fill="#707070"/><path d="M0.5,6 H3.5 M11.5,6 H14.5 M0,9.5 H3.5 M11.5,9.5 H15 M0.5,13 H3.5 M11.5,13 H14.5 M5,2.2 L3.3,0.3 M10,2.2 L11.7,0.3" stroke="#707070" stroke-width="1.5"/></svg>
<div class="t" style="left:146px;top:935px;font-size:13.6px"><span class="u">5</span>: Debug</div>
<svg style="left:230px;top:937px" width="14" height="12" viewBox="0 0 14 12"><path d="M0,1 h2 M4,1 h10 M0,6 h2 M4,6 h10 M0,11 h2 M4,11 h10" stroke="#6e6e6e" stroke-width="1.8"/></svg>
<div class="t" style="left:250px;top:935px;font-size:13.6px"><span class="u">6</span>: TODO</div>
<svg style="left:331px;top:936px" width="15" height="14" viewBox="0 0 15 14"><rect x="0" y="0" width="15" height="14" fill="#6e6e6e"/><path d="M3,3 L7,6.5 L3,10" stroke="#f2f2f2" stroke-width="1.6" fill="none"/></svg>
<div class="t" style="left:351px;top:935px;font-size:13.9px">Terminal</div>
<svg style="left:430px;top:938px" width="15" height="11" viewBox="0 0 15 11"><path d="M0,1 h14 M0,5.5 h9 M0,10 h14" stroke="#6e6e6e" stroke-width="1.9"/></svg>
<div class="t" style="left:451px;top:935px;font-size:13.4px"><span class="u">0</span>: Messages</div>
<svg style="left:1226px;top:935px" width="17" height="17" viewBox="0 0 17 17"><path d="M15.5,15.5 H8.5 A7,7 0 1 1 15.5,8.5 Z" fill="none" stroke="#707070" stroke-width="1.6" stroke-linejoin="round"/></svg>
<div class="t" style="left:1247px;top:935px;font-size:13.9px">Event Log</div>
<div class="a" style="left:1px;top:956px;width:1347px;height:1px;background:#d0d0d0;"></div>
<div class="a" style="left:1px;top:957px;width:1347px;height:26px;background:#f2f2f2;"></div>
<svg style="left:9px;top:962px" width="15" height="15" viewBox="0 0 15 15"><rect x="3.5" y="0.5" width="11" height="11" fill="none" stroke="#777"/><path d="M0.5,3.5 V14.5 H11.5" fill="none" stroke="#777"/></svg>
<div class="t" style="left:35px;top:960px;font-size:16.3px">Build completed successfully in 1 s 383 ms (moments ago)</div>
<div class="t" style="left:1026px;top:961px;">16:2</div>
<div class="t" style="left:1072px;top:961px;transform:scaleX(0.87);transform-origin:0 0">CRLF</div>
<div class="t" style="left:1124px;top:961px;transform:scaleX(0.93);transform-origin:0 0">UTF-8</div>
<div class="t" style="left:1181px;top:961px;transform:scaleX(0.95);transform-origin:0 0">4 spaces</div>
<svg style="left:1257px;top:963px" width="15" height="15" viewBox="0 0 15 15"><path d="M2,7 V4 A3.2,3.2 0 0 1 8.4,4" fill="none" stroke="#6e6e6e" stroke-width="1.8"/><rect x="4" y="7.5" width="10" height="7.5" fill="#6e6e6e"/></svg>
<svg style="left:1288px;top:961px" width="16" height="17" viewBox="0 0 16 17"><path d="M3,5.5 Q3,0.5 8,0.5 Q13,0.5 13,5.5 Z" fill="#6e6e6e"/><rect x="0" y="5" width="16" height="1.8" fill="#6e6e6e"/><ellipse cx="8" cy="10" rx="3.9" ry="3.7" fill="#ececec" stroke="#6e6e6e" stroke-width="1.2"/><circle cx="6.6" cy="9.6" r="0.7" fill="#555"/><circle cx="9.4" cy="9.6" r="0.7" fill="#555"/><path d="M6.7,11.7 Q8,12.6 9.3,11.7" stroke="#555" stroke-width="0.8" fill="none"/><path d="M1.5,17 Q2,13.5 5,13 H11 Q14,13.5 14.5,17 Z" fill="#6e6e6e"/></svg>
<svg style="left:1317px;top:961px" width="18" height="18" viewBox="0 0 18 18"><path d="M16.5,8 H9 V11 H13.3 A4.8,4.8 0 1 1 12.4,4.4 L14.6,2.2 A8,8 0 1 0 17,9.5 Z" fill="#4285f4"/><path d="M3.6,5 A7.8,7.8 0 0 1 14.6,2.2 L12.4,4.4 A4.8,4.8 0 0 0 4.6,6.9 Z" fill="#ea4335"/><path d="M1,9 A7.9,7.9 0 0 1 3.6,5 L6.2,7 A4.8,4.8 0 0 0 5.7,12 L3,14 A7.9,7.9 0 0 1 1,9 z" fill="#fbbc05"/><path d="M3,14 L5.7,12 A4.8,4.8 0 0 0 12.8,13.3 L15,15.3 A7.9,7.9 0 0 1 3,14 Z" fill="#34a853"/></svg>
<div class="a" style="left:0px;top:0px;width:1349px;height:1px;background:#a9a9a9;"></div>
<div class="a" style="left:0px;top:0px;width:1px;height:983px;background:#6a6a6a;"></div>
<div class="a" style="left:1348px;top:0px;width:1px;height:983px;background:#a9a9a9;"></div>
<div class="a" style="left:0px;top:982px;width:1349px;height:1px;background:#a9a9a9;"></div>
</body></html>
